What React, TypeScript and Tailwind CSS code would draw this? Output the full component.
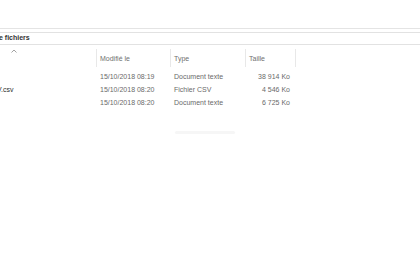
const rows = [
  { name: '', date: '15/10/2018 08:19', type: 'Document texte', size: '38 914 Ko' },
  { name: 'V.csv', date: '15/10/2018 08:20', type: 'Fichier CSV', size: '4 546 Ko' },
  { name: '', date: '15/10/2018 08:20', type: 'Document texte', size: '6 725 Ko' },
];

const Sep = () => <div className="h-[18px] w-px bg-[#e8e8e8]" />;

export default function App() {
  return (
    <div className="h-[280px] w-[420px] overflow-hidden bg-white font-['Liberation_Sans',Arial,sans-serif] text-[7px] text-[#6a6a6a]">
      {/* ribbon edge */}
      <div className="h-[29px] border-b border-[#e4e4e4]" />
      {/* address bar */}
      <div className="mt-[3px] flex h-[13px] items-center overflow-hidden border-y border-[#e2e2e2]">
        <span className="-ml-[1px] whitespace-nowrap font-semibold text-[#333333]">e fichiers</span>
      </div>
      {/* column headers */}
      <div className="mt-[2px] flex h-[21px] items-center">
        <div className="flex w-[96px] items-start self-stretch pl-[11px] pt-[2px]">
          <svg width="6" height="4" viewBox="0 0 6 4" className="text-[#8a8a8a]">
            <path d="M0.5 3.5 L3 1 L5.5 3.5" fill="none" stroke="currentColor" strokeWidth="0.8" />
          </svg>
        </div>
        <Sep />
        <div className="w-[73px] pl-[3px] pt-[4px] text-[#707070]">Modifié le</div>
        <Sep />
        <div className="w-[74px] pl-[3px] pt-[4px] text-[#707070]">Type</div>
        <Sep />
        <div className="w-[49px] pl-[3px] pt-[4px] text-[#707070]">Taille</div>
        <Sep />
      </div>
      {/* rows */}
      <div className="mt-[3px] flex flex-col">
        {rows.map((r, i) => (
          <div key={i} className="flex h-[13px] items-center">
            <div className="w-[97px] overflow-hidden">
              <span className="-ml-[3px] block whitespace-nowrap text-[#2f2f2f]">{r.name}</span>
            </div>
            <div className="w-[74px] pl-[3px]">{r.date}</div>
            <div className="w-[75px] pl-[3px]">{r.type}</div>
            <div className="w-[44px] text-right">{r.size}</div>
          </div>
        ))}
      </div>
      <div className="ml-[175px] mt-[21px] h-[3px] w-[60px] rounded-full bg-[#f6f6f6]" />
    </div>
  );
}
